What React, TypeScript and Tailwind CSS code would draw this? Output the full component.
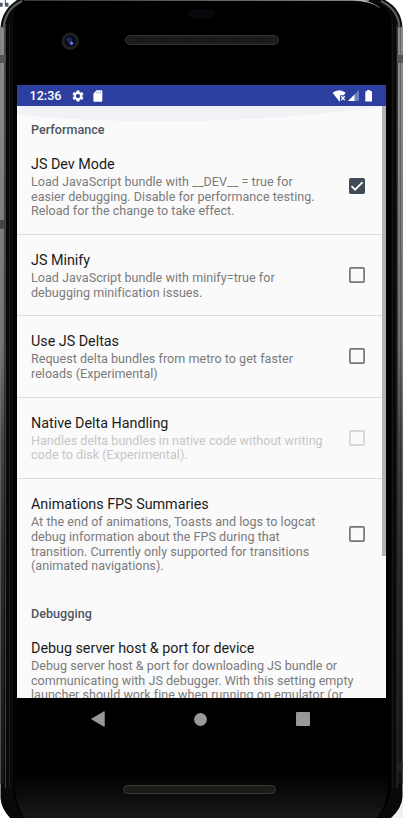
import React from "react";

type Pref = { title: string; lines: string[]; state?: "on" | "off" | "disabled"; height: string };

const performance: Pref[] = [
  { title: "JS Dev Mode", lines: ["Load JavaScript bundle with __DEV__ = true for", "easier debugging. Disable for performance testing.", "Reload for the change to take effect."], state: "on", height: "h-[96px]" },
  { title: "JS Minify", lines: ["Load JavaScript bundle with minify=true for", "debugging minification issues."], state: "off", height: "h-[81.3px]" },
  { title: "Use JS Deltas", lines: ["Request delta bundles from metro to get faster", "reloads (Experimental)"], state: "off", height: "h-[81.3px]" },
  { title: "Native Delta Handling", lines: ["Handles delta bundles in native code without writing", "code to disk (Experimental)."], state: "disabled", height: "h-[81.3px]" },
  { title: "Animations FPS Summaries", lines: ["At the end of animations, Toasts and logs to logcat", "debug information about the FPS during that", "transition. Currently only supported for transitions", "(animated navigations)."], state: "off", height: "h-[110.5px]" },
];

const debugging: Pref = {
  title: "Debug server host & port for device",
  lines: ["Debug server host & port for downloading JS bundle or", "communicating with JS debugger. With this setting empty", "launcher should work fine when running on emulator (or"],
  height: "h-[96px]",
};

function Check({ state }: { state: "on" | "off" | "disabled" }) {
  if (state === "on")
    return (
      <svg className="-mt-px h-4 w-4 shrink-0" viewBox="0 0 16 16">
        <rect width="16" height="16" rx="1.8" fill="#414b58" />
        <path d="M2.5 8.2 6.1 11.7 13.6 4.1" fill="none" stroke="#fafafa" strokeWidth="1.8" />
      </svg>
    );
  return (
    <svg className="h-4 w-4 shrink-0" viewBox="0 0 16 16">
      <rect x="0.9" y="0.9" width="14.2" height="14.2" rx="1.2" fill="none" stroke={state === "off" ? "#757575" : "#d4d4d4"} strokeWidth="1.7" />
    </svg>
  );
}

function Header({ children }: { children: React.ReactNode }) {
  return <h2 className="flex h-[33px] shrink-0 items-end pb-[0.6px] pl-[14px] text-[12.56px] leading-[16px] font-medium tracking-[0.04px] text-[#4d5661]">{children}</h2>;
}

function Row({ pref, divider }: { pref: Pref; divider?: boolean }) {
  const off = pref.state === "disabled";
  return (
    <div className={`flex shrink-0 items-center justify-between pr-[21px] pl-[14px] whitespace-nowrap ${pref.height} ${divider ? "border-b border-[#dcdcdc]" : ""}`}>
      <div className="pt-[1px]">
        <div className="text-[14.35px] leading-[19px] tracking-[-0.02px] text-[#1c1c1c]">{pref.title}</div>
        <div className={`pt-[1px] text-[12.56px] leading-[14.65px] tracking-[0.03px] ${off ? "text-[#c6c6c6]" : "text-[#7b7b7b]"}`}>
          {pref.lines.map((l) => <div key={l}>{l}</div>)}
        </div>
      </div>
      {pref.state && <Check state={pref.state} />}
    </div>
  );
}

function Bezel() {
  return (
    <svg className="absolute inset-0 h-[818px] w-[403px]" viewBox="0 0 403 818">
      <defs>
        <linearGradient id="rail" x1="0" y1="0" x2="0" y2="1">
          <stop offset="0" stopColor="#8a8a8a" />
          <stop offset="0.12" stopColor="#858585" />
          <stop offset="0.42" stopColor="#707070" />
          <stop offset="0.55" stopColor="#444" />
          <stop offset="0.7" stopColor="#2c2c2c" />
          <stop offset="1" stopColor="#151515" />
        </linearGradient>
        <linearGradient id="chin" x1="0" y1="0" x2="0" y2="1">
          <stop offset="0" stopColor="#000" />
          <stop offset="1" stopColor="#181818" />
        </linearGradient>
        <linearGradient id="glint" x1="0" y1="0" x2="1" y2="0">
          <stop offset="0" stopColor="#343838" />
          <stop offset="0.5" stopColor="#596260" />
          <stop offset="1" stopColor="#7e8785" />
        </linearGradient>
        <pattern id="mesh" width="3" height="3" patternUnits="userSpaceOnUse">
          <rect width="3" height="3" fill="#191815" />
          <rect width="1.3" height="2.4" fill="#24221e" />
        </pattern>
      </defs>
      <rect width="403" height="818" fill="#fff" />
      <rect x="383" y="780" width="20" height="38" fill="#f1f1f1" />
      <path d="M0 4.7H2.7M5 4.7H8.5" stroke="#4e5a68" strokeWidth="4" fill="none" />
      <path d="M5.3 0V5" stroke="#4e5a68" strokeWidth="1" />
      <path d="M17 0C8 6 1 15 .5 28V798Q1 808 10 818H391Q402 808 402.5 797V28C402 15 396 6 385 0Z" fill="#090909" />
      <rect x="0.5" y="27" width="4.5" height="757" fill="url(#rail)" />
      <rect x="4" y="27" width="1" height="757" fill="#000" fillOpacity="0.45" />
      <rect x="5" y="24" width="1" height="764" fill="#3c3c3c" />
      <rect x="9" y="24" width="1" height="764" fill="#1c1c1c" />
      <rect x="397.5" y="27" width="5" height="757" fill="url(#rail)" />
      <rect x="400" y="27" width="1" height="757" fill="#000" fillOpacity="0.25" />
      <rect x="396.5" y="24" width="1" height="764" fill="#333" />
      <rect x="392" y="24" width="1" height="764" fill="#171717" />
      <path d="M3.5 28C5 15 10 7 22 1M399.5 28C399 15 393 7 381 1" fill="none" stroke="#5c5c5c" strokeWidth="2.2" />
      <path d="M13 24Q13 4 27 1H367Q391 4 391 25V788Q390 803 378 818H25Q13 805 13 788Z" fill="#000" />
      <path d="M14 772H389Q389 803 377 818H25Q14 804 14 772Z" fill="url(#chin)" />
      <rect x="24" width="345" height="1" fill="url(#glint)" />
      <path d="M352 .7Q371 1 381 8.5Q374 2.5 363 0Z" fill="#bac3c1" />
      <rect y="55" width="5.5" height="8" fill="#555" />
      <rect x="397" y="55" width="6" height="8" fill="#555" />
      <rect y="220" width="5.5" height="9" fill="#454545" />
      <rect x="397" y="762" width="5.5" height="9" fill="#222" />
      <rect x="188" y="9" width="27" height="9.5" rx="4.7" fill="#07070b" />
      <circle cx="70.3" cy="41.2" r="8.7" fill="#202020" />
      <circle cx="70.3" cy="41.2" r="5.7" fill="#090b18" />
      <circle cx="69.5" cy="40" r="2.7" fill="#1b2757" />
      <circle cx="71.5" cy="43.3" r="1.7" fill="#6079e5" />
      <circle cx="67.5" cy="39" r="0.8" fill="#3547a5" />
      <rect x="125.5" y="35.5" width="153" height="9" rx="4.5" fill="url(#mesh)" stroke="#343434" />
      <rect x="123.5" y="785.5" width="152" height="8" rx="4" fill="url(#mesh)" stroke="#3c3a36" />
    </svg>
  );
}

function StatusBar() {
  return (
    <div className="flex h-[21px] shrink-0 items-center bg-[#2c3e9e] pr-[12px] pl-[12.5px] text-white">
      <span className="w-[41px] pt-[1px] text-[12.6px] leading-none font-medium">12:36</span>
      <svg className="h-[14px] w-[14px]" viewBox="0 0 24 24" fill="currentColor">
        <path d="M19.14 12.94c.04-.3.06-.61.06-.94 0-.32-.02-.64-.07-.94l2.03-1.58c.18-.14.23-.41.12-.61l-1.92-3.32c-.12-.22-.37-.29-.59-.22l-2.39.96c-.5-.38-1.03-.7-1.62-.94L14.4 2.81c-.04-.24-.24-.41-.48-.41h-3.84c-.24 0-.43.17-.47.41L9.25 5.35c-.59.24-1.13.57-1.62.94l-2.39-.96c-.22-.08-.47 0-.59.22L2.74 8.87c-.12.21-.08.47.12.61l2.03 1.58c-.05.3-.09.63-.09.94s.02.64.07.94l-2.03 1.58c-.18.14-.23.41-.12.61l1.92 3.32c.12.22.37.29.59.22l2.39-.96c.5.38 1.03.7 1.62.94l.36 2.54c.05.24.24.41.48.41h3.84c.24 0 .44-.17.47-.41l.36-2.54c.59-.24 1.13-.56 1.62-.94l2.39.96c.22.08.47 0 .59-.22l1.92-3.32c.12-.22.07-.47-.12-.61l-2.01-1.58zM12 15.6c-1.98 0-3.6-1.62-3.6-3.6s1.62-3.6 3.6-3.6 3.6 1.62 3.6 3.6-1.62 3.6-3.6 3.6z" />
      </svg>
      <svg className="ml-[8px] h-[12px] w-[10px]" viewBox="0 0 10 12">
        <path d="M3.5.3H8.3Q9.3.3 9.3 1.3V10.7Q9.3 11.7 8.3 11.7H1.4Q.4 11.7.4 10.7V3.8Z" fill="white" />
        <path d="M4 1.5V3.5M5.8 1.5V3.5M7.6 1.5V3.5" stroke="#8f9bd0" strokeWidth=".8" />
      </svg>
      <svg className="ml-auto h-[14px] w-[42px]" viewBox="0 0 42 14">
        <path d="M.5 3.7Q7-1.4 13.8 3.7L11.7 6.2H8V12L7.4 12.4Z" fill="white" />
        <path d="m9.2 7.3 3.5 3.8M12.7 7.3 9.2 11.1" stroke="white" strokeWidth="1.3" />
        <path d="M16 12 27 1V12Z" fill="#707fc0" />
        <path d="M16 12 22.5 5.5V12Z" fill="white" />
        <path d="M35 1H38.2V2.2H40V12.6H33.3V2.2H35Z" fill="white" />
      </svg>
    </div>
  );
}

export default function App() {
  return (
    <div className="relative h-[818px] w-[403px] overflow-hidden font-['Roboto',sans-serif]">
      <Bezel />
      <div className="relative flex h-full flex-col pt-[85px] pr-[17px] pl-[17px]">
        <main className="flex h-[612.5px] w-[369px] shrink-0 flex-col overflow-hidden bg-[#fafafa]">
          <StatusBar />
          <div className="relative flex min-h-0 flex-1 flex-col overflow-hidden">
            <svg className="absolute inset-x-0 top-0 h-4 w-full" viewBox="0 0 369 16" preserveAspectRatio="none">
              <path d="M0 0H369V1Q245 15 158 15.5Q75 16 0 8.5Z" fill="#f2f1f6" />
            </svg>
            <div className="relative flex flex-col">
              <Header>Performance</Header>
              {performance.map((p, i) => <Row key={p.title} pref={p} divider={i < 4} />)}
              <Header>Debugging</Header>
              <Row pref={debugging} />
            </div>
            <div className="absolute top-0 right-0 h-[450px] w-1 bg-[#b2b2b2]" />
          </div>
        </main>
        <nav className="flex h-[43px] shrink-0 items-center justify-between pr-[76px] pl-[74px]">
          <svg className="h-4 w-[14px]" viewBox="0 0 14 16"><path d="M.7 8 13.2 .7V15.3Z" fill="#999" stroke="#999" strokeLinejoin="round" /></svg>
          <svg className="h-[13px] w-[13px]" viewBox="0 0 13 13"><circle cx="6.5" cy="6.5" r="6.4" fill="#999" /></svg>
          <div className="h-[14px] w-[14px] rounded-[1px] bg-[#999]" />
        </nav>
      </div>
    </div>
  );
}
